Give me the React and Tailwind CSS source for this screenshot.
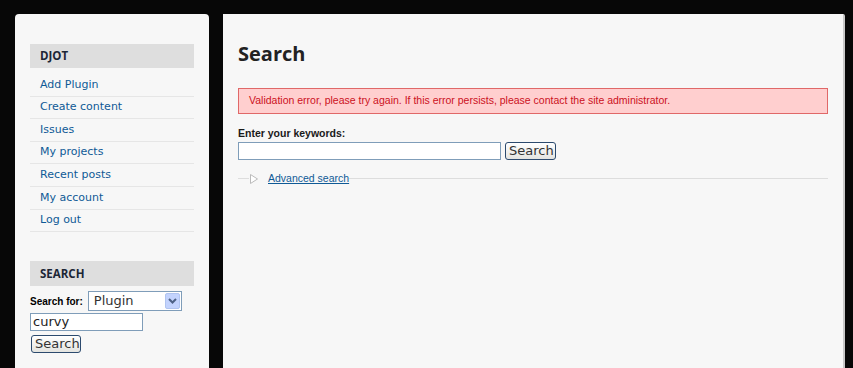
const links = ["Add Plugin", "Create content", "Issues", "My projects", "Recent posts", "My account", "Log out"];

function SearchButton({ className = "" }) {
  return (
    <button className={`h-[18px] px-[3px] rounded-[3px] border border-[#2c4a6e] bg-gradient-to-b from-white to-[#e4e4e0] text-[#333] text-[13px] leading-none font-['DejaVu_Sans',sans-serif] ${className}`}>
      Search
    </button>
  );
}

export default function App() {
  return (
    <div className="w-[853px] h-[368px] overflow-hidden bg-[#070707] flex gap-[14px] pl-[15px] pt-[14px] font-['DejaVu_Sans',sans-serif]">
      {/* sidebar */}
      <div className="w-[194px] h-[360px] bg-[#f7f7f7] rounded-t-[4px] px-[15px] pt-[30px]">
        <div className="h-[24px] bg-[#dedede] flex items-center pl-[10px] text-[11.5px] font-bold text-[#1c2636] font-['Open_Sans',sans-serif]">DJOT</div>
        <ul className="mt-[6px]">
          {links.map((l) => (
            <li key={l} className="h-[22.6px] border-b border-[#e6e6e6] flex items-center pl-[10px] text-[11px] text-[#0f5a96]">
              {l}
            </li>
          ))}
        </ul>
        <div className="mt-[29px] h-[25px] bg-[#dedede] flex items-center pl-[10px] text-[11.5px] font-bold text-[#1c2636] font-['Open_Sans',sans-serif]">SEARCH</div>
        <div className="mt-[5px] flex items-center gap-[5px]">
          <span className="text-[10px] font-bold text-black font-['Liberation_Sans',sans-serif]">Search for:</span>
          <div className="w-[94px] h-[20px] border border-[#7f9db9] bg-white flex items-center justify-between pl-[5px] pr-[1px]">
            <span className="text-[13px] text-[#333]">Plugin</span>
            <span className="w-[15px] h-[16px] rounded-[2px] bg-[#c3d3fd] border border-[#b0c4f0] flex items-center justify-center">
              <svg width="9" height="6" viewBox="0 0 9 6"><path d="M1 1l3.5 3.5L8 1" stroke="#4d6185" strokeWidth="2" fill="none" /></svg>
            </span>
          </div>
        </div>
        <div className="mt-[2px] w-[113px] h-[18px] border border-[#7f9db9] bg-white flex items-center pl-[2px] text-[13px] text-[#222]">curvy</div>
        <SearchButton className="ml-[1px] w-[50px]" />
      </div>

      {/* main */}
      <div className="w-[622px] h-[360px] bg-[#f7f7f7] rounded-tr-[2px] border-r-2 border-[#c8c8c8] px-[15px] pt-[26px]">
        <h1 className="text-[20px] font-bold text-[#222] font-['Open_Sans',sans-serif] leading-[28px]">Search</h1>
        <div className="mt-[20px] w-[590px] h-[26px] bg-[#ffcfcf] border border-[#e06868] flex items-center pl-[10px] text-[10.5px] text-[#cc1122] font-['Liberation_Sans',sans-serif]">
          Validation error, please try again. If this error persists, please contact the site administrator.
        </div>
        <div className="mt-[12px] text-[10.5px] font-bold text-[#1a1a1a] font-['Liberation_Sans',sans-serif]">Enter your keywords:</div>
        <div className="flex items-center gap-[4px]">
          <div className="w-[263px] h-[18px] border border-[#7f9db9] bg-white" />
          <SearchButton className="w-[51px]" />
        </div>
        <div className="mt-[11px] flex items-center h-[16px]">
          <div className="w-[11px] h-px bg-[#ddd]" />
          <svg width="10" height="12" viewBox="0 0 10 12"><path d="M1.5 1.5L8.5 6L1.5 10.5Z" fill="#fff" stroke="#bbb" strokeWidth="1" /></svg>
          <span className="ml-[9px] text-[10.5px] text-[#0f5a96] underline font-['Liberation_Sans',sans-serif]">Advanced search</span>
          <div className="flex-1 h-px bg-[#ddd]" />
        </div>
      </div>
    </div>
  );
}
